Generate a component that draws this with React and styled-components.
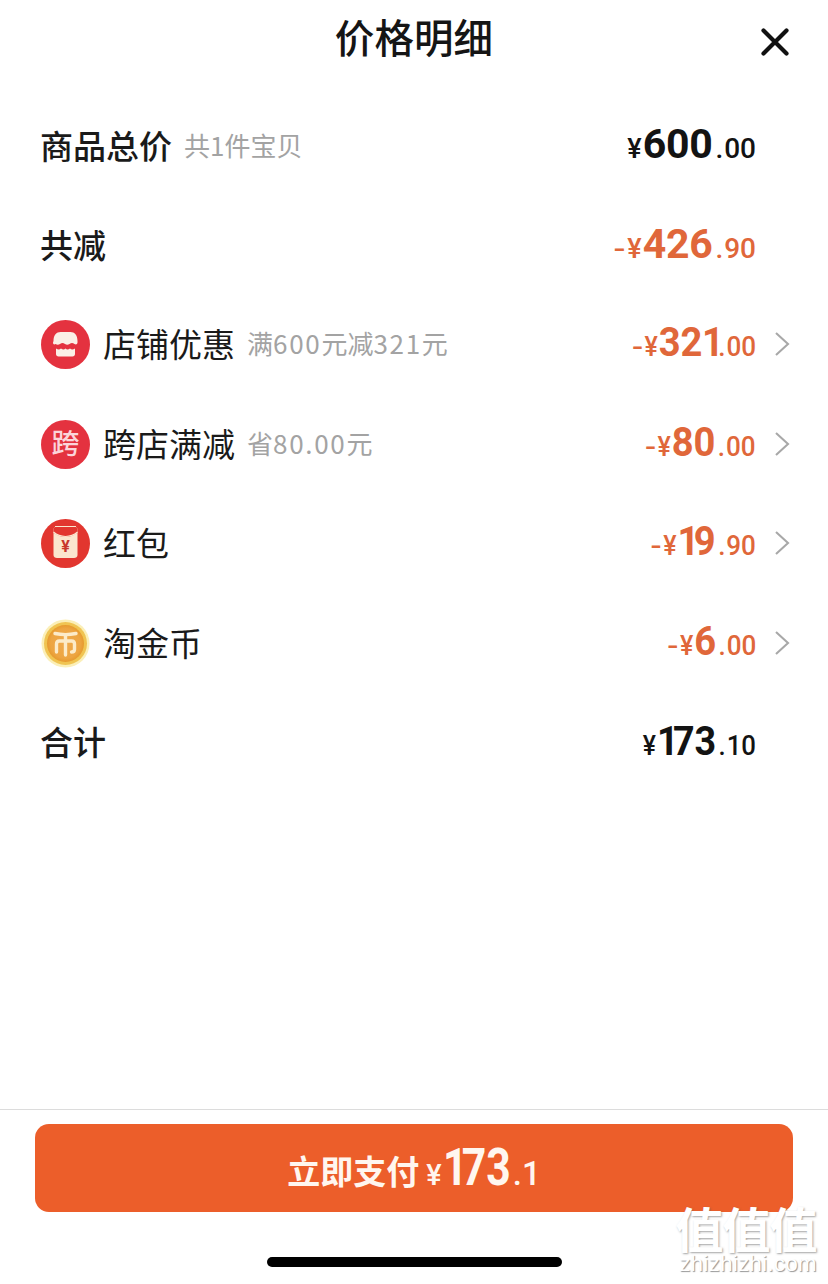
import React from "react";
import styled, { createGlobalStyle } from "styled-components";

const CJK = `"Noto Sans CJK SC", "Noto Sans", sans-serif`;
const NUM = `Roboto, "Liberation Sans", sans-serif`;

const Global = createGlobalStyle`
  html, body { margin: 0; padding: 0; background: #fff; }
  * { box-sizing: border-box; }
`;
const Page = styled.div`
  position: relative; width: 828px; height: 1284px; background: #fff;
  display: flex; flex-direction: column; overflow: hidden; font-family: ${CJK}; color: #111;
`;
const Header = styled.header`
  height: 95px; padding-top: 9px; display: flex; justify-content: center; align-items: flex-start; position: relative;
`;
const Title = styled.h1`
  margin: 0; font-size: 39.5px; line-height: 54px; font-weight: 500; letter-spacing: .1px; color: #151515;
`;
const Close = styled.svg`
  position: absolute; left: 760px; top: 28px; width: 30px; height: 28px;
`;
const List = styled.main`
  flex: 1; display: grid; grid-auto-rows: 99.4px; padding: 0 38px 0 40px; align-content: start;
`;
const Row = styled.div`
  display: flex; align-items: center;
`;
const Badge = styled.svg`
  width: 49px; height: 49px; margin: 3px 13px 0 1px; flex: none;
`;
const Label = styled.span`
  font-size: 33px; line-height: 44px; font-weight: ${p => (p.$strong ? 500 : 400)}; color: #1a1a1a;
  white-space: nowrap;
`;
const Note = styled.span`
  margin-left: 12px; font-size: 26px; line-height: 40px; color: #a3a3a3; white-space: nowrap;
`;
const NoteDigits = styled.span`
  letter-spacing: 1.7px;
`;
const Amount = styled.span`
  margin-left: auto; margin-right: ${p => (p.$chevron ? 0 : "34px")};
  display: inline-flex; align-items: baseline; font-family: ${NUM}; color: ${p => (p.$accent ? "#E0673A" : "#131313")};
  white-space: nowrap; position: relative; top: ${p => p.$shift}px;
  transform: scaleX(${p => p.$squeeze}); transform-origin: right center;
`;
const Minus = styled.span`
  display: inline-block; font-size: 27px; font-weight: 500; margin-right: 3px; transform: scaleX(1.3);
`;
const Yen = styled.span`
  font-size: 27px; font-weight: 500; margin-right: 1px;
`;
const Big = styled.span`
  font-size: 41px; font-weight: 700; letter-spacing: -.3px;
`;
const NarrowOne = styled.span`
  letter-spacing: ${p => p.$tighten}px;
`;
const Dot = styled.span`
  font-size: 28px; font-weight: 500; margin: 0 1px 0 3px;
`;
const Small = styled.span`
  font-size: 28px; font-weight: 500;
`;
const Chevron = styled.svg`
  width: 16px; height: 26px; margin-left: 18px; flex: none; position: relative; top: 1px;
`;
const Footer = styled.footer`
  border-top: 1px solid #dcdcdc; height: 175px; padding: 14px 35px 0; display: flex; flex-direction: column; align-items: stretch;
`;
const PayButton = styled.button`
  height: 88px; width: 758px; border: 0; border-radius: 14px; background: #EC5E2A; color: #fff6ef;
  display: flex; align-items: center; justify-content: center; padding: 0; font-family: ${CJK};
`;
const PayText = styled.span`
  font-size: 33px; font-weight: 700; line-height: 44px; margin-right: 7px; position: relative; top: 2px;
`;
const PayNum = styled.span`
  font-family: ${NUM}; display: inline-flex; align-items: baseline; position: relative; top: -1px;
`;
const PayYen = styled.span` font-size: 29px; font-weight: 500; margin-right: 1px; `;
const PayBig = styled.span`
  display: inline-block; width: 70px; font-size: 52px; font-weight: 700; white-space: nowrap;
  transform: scaleX(.82); transform-origin: left center;
`;
const PaySmall = styled.span` font-size: 33px; font-weight: 500; `;
const HomeBar = styled.div`
  width: 295px; height: 10px; border-radius: 5px; background: #000; margin: 45px auto 0 232px;
`;
const Watermark = styled.div`
  position: absolute; left: 671px; top: 1202px; width: 150px; display: flex; flex-direction: column; align-items: center;
  color: #fff; pointer-events: none; text-shadow: 1px 1px 2px rgba(90,90,90,.55);
`;
const WmMain = styled.span`
  font-size: 48px; line-height: 50px; font-weight: 700; letter-spacing: -1px; white-space: nowrap;
`;
const WmSub = styled.span`
  font-family: "Liberation Sans", sans-serif; font-size: 22.5px; line-height: 24px; letter-spacing: .2px; color: #fff;
  text-shadow: 1px 1px 1px rgba(80,80,80,.6); white-space: nowrap; margin-left: 4px;
`;

const ShopIcon = () => (
  <Badge viewBox="0 0 49 49">
    <circle cx="24.5" cy="24.5" r="24.5" fill="#E4323F" />
    <path d="M12.500 21c0-6 3-9 7-9h10c4 0 7 3 7 9v1.500c0 1.800-1.700 2.500-3 1.500-1.800-1.400-3.200-1.400-5 0-1.500 1-3 1-4.500 0-1.800-1.400-3.200-1.400-5 0-1.500 1-3 1-4.500 0-1.300 1-2.500.3-2.500-1.500z" fill="#FBEFE6" />
    <path d="M15 28.500c2.200 1.200 3.300 1.200 5 0 1.500 1 3 1.500 4.500 0 1.500 1.500 3 1 4.500 0 1.700 1.200 2.800 1.200 5 0V34c0 1.500-1 2.500-2.500 2.500h-14c-1.500 0-2.500-1-2.500-2.500z" fill="#FBEFE6" />
  </Badge>
);
const CrossIcon = () => (
  <Badge viewBox="0 0 49 49">
    <circle cx="24.5" cy="24.5" r="24.5" fill="#E4323F" />
    <text x="24.5" y="34" textAnchor="middle" fontSize="28" fontWeight="500" fontFamily={CJK} fill="#FBD5DA">跨</text>
  </Badge>
);
const PacketIcon = () => (
  <Badge viewBox="0 0 49 49">
    <circle cx="24.500" cy="24.500" r="24.500" fill="#E2362F" />
    <path d="M12.500 10.500C12.500 8.500 14 7.500 16 7.500h17c2 0 3.500 1 3.500 3V36c0 2-1.500 3-3.500 3H16c-2 0-3.500-1-3.500-3z" fill="#FBE6CE" />
    <path d="M12.500 13.500c3.500 3 8 4.500 12 4.500s8.500-1.500 12-4.500V10.500c0-2-1.500-3-3.500-3H16c-2 0-3.500 1-3.500 3z" fill="#E2362F" />
    <path d="M14 7.500h21" stroke="#FBE6CE" strokeWidth="1" />
    <path d="M12.500 13c3.500 3 8 4.500 12 4.500s8.500-1.500 12-4.500" fill="none" stroke="#FBE6CE" strokeWidth="1.200" />
    <text x="24.500" y="33" textAnchor="middle" fontSize="16" fontWeight="700" fontFamily={NUM} fill="#C8362B">¥</text>
  </Badge>
);
const CoinIcon = () => (
  <Badge viewBox="0 0 49 49">
    <defs>
      <radialGradient id="coinFace" cx="50%" cy="50%" r="50%">
        <stop offset="0%" stopColor="#EFAA4E" />
        <stop offset="80%" stopColor="#EDA542" />
        <stop offset="100%" stopColor="#E69A2E" />
      </radialGradient>
    </defs>
    <circle cx="24.500" cy="24.500" r="24" fill="#FBEFB8" />
    <circle cx="24.500" cy="24.500" r="21.500" fill="#F0C452" />
    <circle cx="24.500" cy="24.500" r="18.500" fill="url(#coinFace)" />
    <g fill="none" stroke="#FCEBC9" strokeWidth="3.400" strokeLinecap="round">
      <path d="M14 14.500c7 1.500 14 1.500 21 0" />
      <path d="M24.500 16v20" />
      <path d="M15.500 33v-8c0-2 1-3 3-3h12c2 0 3 1 3 3v5.500c0 1.500-1 2.500-3 2.500" />
    </g>
  </Badge>
);
const Arrow = () => (
  <Chevron viewBox="0 0 16 26">
    <path d="M2 2l12 11L2 24" fill="none" stroke="#a8a8a8" strokeWidth="2.100" />
  </Chevron>
);

const Digits = ({ value, lead, tail }) =>
  [...value].map((c, i) =>
    c === "1" ? (
      <NarrowOne key={i} $tighten={i === value.length - 1 ? tail : lead}>1</NarrowOne>
    ) : (
      <React.Fragment key={i}>{c}</React.Fragment>
    )
  );

const Money = ({ minus, whole, dec, accent, chevron, shift = 0, squeeze = 1 }) => (
  <Amount $accent={accent} $chevron={chevron} $shift={shift} $squeeze={squeeze}>
    {minus && <Minus>-</Minus>}
    <Yen>¥</Yen>
    <Big><Digits value={whole} lead={-6} tail={-9} /></Big>
    <Dot>.</Dot>
    <Small>{dec}</Small>
  </Amount>
);

const discounts = [
  { Icon: ShopIcon, label: "店铺优惠", note: <>满<NoteDigits>600</NoteDigits>元减<NoteDigits>321</NoteDigits>元</>, whole: "321", dec: "00" },
  { Icon: CrossIcon, label: "跨店满减", note: <>省<NoteDigits>80.00</NoteDigits>元</>, whole: "80", dec: "00" },
  { Icon: PacketIcon, label: "红包", whole: "19", dec: "90" },
  { Icon: CoinIcon, label: "淘金币", whole: "6", dec: "00" },
];

export default function App() {
  return (
    <Page>
      <Global />
      <Header>
        <Title>价格明细</Title>
        <Close viewBox="0 0 30 28">
          <path d="M3.500 2.500l23 23M26.500 2.500l-23 23" stroke="#111" strokeWidth="4.200" strokeLinecap="round" />
        </Close>
      </Header>
      <List>
        <Row>
          <Label $strong>商品总价</Label>
          <Note>共1件宝贝</Note>
          <Money whole="600" dec="00" shift={-1} />
        </Row>
        <Row>
          <Label $strong>共减</Label>
          <Money minus whole="426" dec="90" accent />
        </Row>
        {discounts.map(({ Icon, label, note, whole, dec }) => (
          <Row key={label}>
            <Icon />
            <Label>{label}</Label>
            {note && <Note>{note}</Note>}
            <Money minus whole={whole} dec={dec} accent chevron shift={-1} squeeze={0.93} />
            <Arrow />
          </Row>
        ))}
        <Row>
          <Label $strong>合计</Label>
          <Money whole="173" dec="10" squeeze={0.92} />
        </Row>
      </List>
      <Footer>
        <PayButton>
          <PayText>立即支付</PayText>
          <PayNum>
            <PayYen>¥</PayYen>
            <PayBig><Digits value="173" lead={-7} tail={-7} /></PayBig>
            <PaySmall>.1</PaySmall>
          </PayNum>
        </PayButton>
        <HomeBar />
      </Footer>
      <Watermark>
        <WmMain>值值值</WmMain>
        <WmSub>zhizhizhi.com</WmSub>
      </Watermark>
    </Page>
  );
}
